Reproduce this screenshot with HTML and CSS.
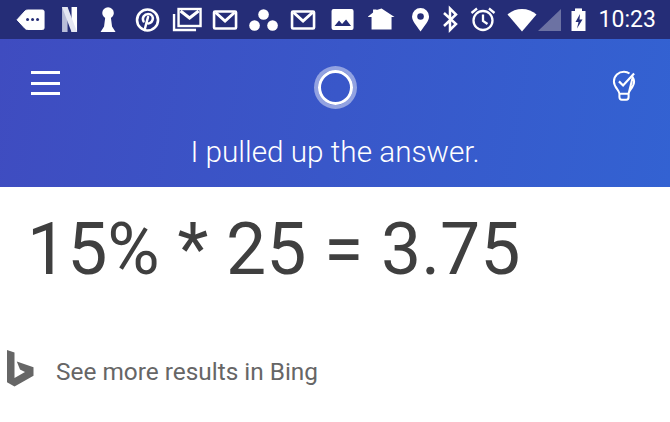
FILE: index.html
```html
<!DOCTYPE html>
<html>
	<head>
		<meta charset="UTF-8">
		<title>Cortana answer</title>
		<link rel="stylesheet" href="styles.css">
	</head>
	<body>
		<div class="status-bar">
			<svg class="ic" viewBox="0 0 39 39"><path d="M6 19.800 14 11Q15 10 16.500 10H31.500Q33 10 33 11.500V28Q33 29.500 31.500 29.500H16.500Q15 29.500 14 28.500Z" fill="#fff" stroke="#fff" stroke-width="1"/><g fill="#252d77"><circle cx="16.500" cy="19.500" r="1.500"/><circle cx="21.500" cy="19.500" r="1.500"/><circle cx="26.500" cy="19.500" r="1.500"/></g></svg>
			<svg class="ic" viewBox="0 0 39 39"><path d="M12 7H17.500V32H12Z" fill="#b9bdd8"/><path d="M21.500 7H27V32H21.500Z" fill="#fff"/><path d="M12 7H17.500L27 32H21.500Z" fill="#e4e6f2"/></svg>
			<svg class="ic" viewBox="0 0 39 39"><circle cx="19" cy="13" r="5.800" fill="#fff"/><path d="M16.500 15H21.500L23 26.500 26.500 32H11.500L15 26.500Z" fill="#fff"/></svg>
			<svg class="ic" viewBox="0 0 39 39"><circle cx="19.500" cy="20" r="10.500" fill="none" stroke="#fff" stroke-width="2.600"/><path d="M15.500 21.500C13.500 17.500 16.500 14 20 14 24 14 25.500 17 24.500 20 23.500 23 20 24.500 18.500 22.500M20 17 16.500 30" fill="none" stroke="#fff" stroke-width="2.500" stroke-linecap="round"/></svg>
			<svg class="ic" viewBox="0 0 39 39"><path d="M7 14V30H29" fill="none" stroke="#fff" stroke-width="2.400"/><rect x="11.500" y="9" width="22" height="17" fill="none" stroke="#fff" stroke-width="2.400"/><path d="M13.500 11 22.500 18 31.500 11" fill="none" stroke="#fff" stroke-width="3"/></svg>
			<svg class="ic" viewBox="0 0 39 39"><rect x="8" y="11.500" width="22" height="17" rx="1" fill="none" stroke="#fff" stroke-width="2.600"/><path d="M9.500 12.500 19 21 28.500 12.500" fill="none" stroke="#fff" stroke-width="3"/></svg>
			<svg class="ic" viewBox="0 0 39 39"><circle cx="18.500" cy="14.500" r="5.300" fill="#fff"/><circle cx="9.500" cy="25.500" r="5.300" fill="#fff"/><circle cx="27.500" cy="25.500" r="5.300" fill="#fff"/></svg>
			<svg class="ic" viewBox="0 0 39 39"><rect x="8" y="11.500" width="22" height="17" rx="1" fill="none" stroke="#fff" stroke-width="2.600"/><path d="M9.500 12.500 19 21 28.500 12.500" fill="none" stroke="#fff" stroke-width="3"/></svg>
			<svg class="ic" viewBox="0 0 39 39"><rect x="8.500" y="9" width="22" height="21" rx="2" fill="#fff"/><path d="M11.500 26 16 20.500 19 24 23 19.500 28 26Z" fill="#252d77"/></svg>
			<svg class="ic" viewBox="0 0 39 39"><path d="M6 16.500 11 12.500V9.500H14.500V10L19.500 8.500 32.500 17H29.500V29.500H9.500V17H6Z" fill="#fff"/></svg>
			<svg class="ic" viewBox="0 0 39 39"><path d="M19.500 31.500C15 25 11 21 11 16.500A8.500 8.500 0 0 1 28 16.500C28 21 24 25 19.500 31.500Z" fill="#fff"/><circle cx="19.500" cy="16.500" r="3.300" fill="#252d77"/></svg>
			<svg class="ic-bt" viewBox="0 0 19 39"><path d="M3 13 15 24 9 30V8.500L15 14.500 3 26" fill="none" stroke="#fff" stroke-width="2.500"/></svg>
			<svg class="ic-alarm" viewBox="0 0 34 39"><circle cx="17" cy="20.500" r="9.500" fill="none" stroke="#fff" stroke-width="2.300"/><path d="M17 14.500V21L21.500 24M5.500 13 11 8.500M28.500 13 23 8.500" fill="none" stroke="#fff" stroke-width="2.300"/></svg>
			<svg class="ic-wifi" viewBox="0 0 38 39"><path d="M4.500 14.500C12 7 26 7 33.500 14.500L19 31.500Z" fill="#fff"/></svg>
			<svg class="ic-cell" viewBox="0 0 25 39"><path d="M1 31 24 9V31Z" fill="#fff" fill-opacity=".33"/></svg>
			<svg class="ic-batt" viewBox="0 0 21 39"><path d="M3.500 11H7V8.500H14V11H17.500V31H3.500Z" fill="#fff"/><path d="M7.500 8.500H13.500V11H7.500Z" fill="#fff" fill-opacity=".4"/><path d="M12 14 7.500 22H10.500L9 28.500 14.500 19.500H11.500Z" fill="#252d77"/></svg>
			<span class="time">10:23</span>
		</div>
		<div class="header">
			<div class="toolbar">
				<div class="menu"><i></i><i></i><i></i></div>
				<div class="logo"></div>
				<svg class="bulb" viewBox="0 0 28 36"><path d="M9 27C9 23 3 20 3 13.500 3 7.500 8 3 14 3 16.500 3 18.500 3.800 20 5M23.500 9C24.500 10.500 25 12 25 13.500 25 20 19 23 19 27ZM9 27H19V30.500C19 32.500 18 33.500 16.500 33.500H11.500C10 33.500 9 32.500 9 30.500Z" fill="none" stroke="#fff" stroke-width="2.200"/><path d="M8.500 13.500 13 18 25 5" fill="none" stroke="#fff" stroke-width="2.400"/></svg>
			</div>
			<h2 class="say">I pulled up the answer.</h2>
		</div>
		<div class="answer">15% * 25 = 3.75</div>
		<div class="bing">
			<svg class="bing-logo" viewBox="0 0 27 37"><path d="M0 0 7.500 2.600V28L18 22 13 19.600 9.800 11.500 26.500 17.300V25.800L7.500 36.500 0 32.300Z" fill="#666"/></svg>
			<span>See more results in Bing</span>
		</div>
	</body>
</html>
```

FILE: styles.css
```css
body { margin: 0; width: 670px; height: 422px; overflow: hidden; background: #fff; font-family: Roboto, sans-serif; }

.status-bar { display: flex; align-items: center; height: 39px; padding-left: 10.5px; background: #252d77; }
.status-bar svg { display: block; height: 39px; flex: none; }
.ic { width: 39.1px; }
.ic-bt { width: 19px; }
.ic-alarm { width: 34px; margin-left: 6px; }
.ic-wifi { width: 38px; margin-left: 3px; }
.ic-cell { width: 25px; margin-left: -4px; }
.ic-batt { width: 21px; margin-left: 6px; }
.time { margin-left: 10px; color: #fff; font-size: 23px; }

.header { height: 148px; background: linear-gradient(100deg, #3f4cc0, #3362d2); color: #fff; }
.toolbar { display: flex; align-items: center; justify-content: space-between; height: 96px; padding: 0 33px 0 31px; }
.menu { display: flex; flex-direction: column; gap: 7.5px; width: 29px; margin-bottom: 8px; }
.menu i { display: block; height: 3px; background: #fff; }
.logo { width: 29px; height: 29px; border: 3px solid #fff; border-radius: 50%; box-shadow: 0 0 0 4px rgba(255,255,255,.45); }
.bulb { width: 26px; height: 33px; margin-bottom: 4px; }
.say { margin: 0; font-size: 29.7px; font-weight: 300; text-align: center; line-height: 34px; }

.answer { padding: 18px 0 0 27px; font-size: 71.5px; line-height: 90px; color: #3f3f3f; }
.bing { display: flex; align-items: center; gap: 22px; margin-top: 55px; padding-left: 7px; color: #666; font-size: 24.4px; }
.bing-logo { width: 27px; height: 37px; margin-bottom: 6px; }
```
